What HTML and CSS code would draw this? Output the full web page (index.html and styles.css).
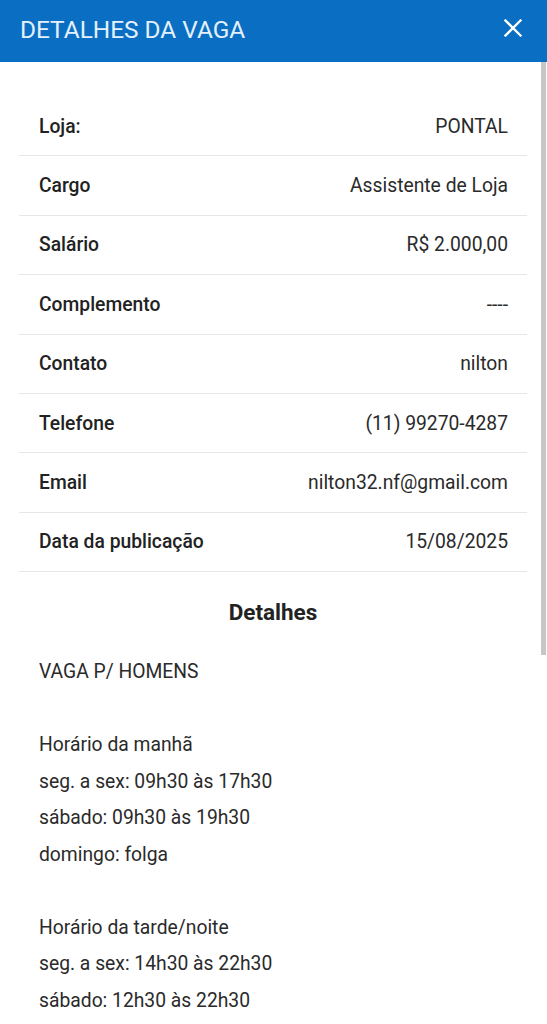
FILE: index.html
```html
<!DOCTYPE html>
<html lang="pt-BR">
  <head>
    <meta charset="UTF-8" />
    <meta name="viewport" content="width=device-width, initial-scale=1.0" />
    <title>Detalhes da vaga</title>
    <link rel="stylesheet" href="styles.css">
  </head>
  <body>
    <header class="topbar">
      <h1>DETALHES DA VAGA</h1>
      <button class="close" aria-label="Fechar">
        <svg width="18" height="18" viewBox="0 0 18 18">
          <path d="M1.5 1.5 L16.5 16.5 M16.5 1.5 L1.5 16.5" stroke="#ffffff" stroke-width="2.3" stroke-linecap="square" />
        </svg>
      </button>
    </header>

    <main class="content">
      <table class="info">
        <tbody>
          <tr><th>Loja:</th><td>PONTAL</td></tr>
          <tr><th>Cargo</th><td>Assistente de Loja</td></tr>
          <tr><th>Salário</th><td>R$ 2.000,00</td></tr>
          <tr><th>Complemento</th><td>----</td></tr>
          <tr><th>Contato</th><td>nilton</td></tr>
          <tr><th>Telefone</th><td>(11) 99270-4287</td></tr>
          <tr><th>Email</th><td>nilton32.nf@gmail.com</td></tr>
          <tr><th>Data da publicação</th><td>15/08/2025</td></tr>
        </tbody>
      </table>

      <h2>Detalhes</h2>
      <div class="details">VAGA P/ HOMENS

Horário da manhã
seg. a sex: 09h30 às 17h30
sábado: 09h30 às 19h30
domingo: folga

Horário da tarde/noite
seg. a sex: 14h30 às 22h30
sábado: 12h30 às 22h30</div>
    </main>

    <div class="scroll-thumb"></div>
  </body>
</html>
```

FILE: styles.css
```css
body {
  margin: 0;
  font-family: Roboto, "Liberation Sans", Arial, sans-serif;
  color: #222;
  background: #fff;
  height: 1024px;
  overflow: hidden;
}
.topbar {
  height: 62px;
  background-color: #0a6fc2;
  display: flex;
  align-items: center;
  justify-content: space-between;
  padding: 0 25px 0 20px;
}
.topbar h1 {
  margin: 0 0 4px;
  font-size: 24.4px;
  font-weight: 400;
  color: #e4f1fd;
}
.close {
  background: none;
  border: 0;
  padding: 0;
  display: flex;
  margin-bottom: 6px;
}
.content {
  padding: 35px 20px 0 19px;
}
.info {
  width: 100%;
  border-collapse: collapse;
  font-size: 19.3px;
}
.info th,
.info td {
  height: 58.4px;
  border-bottom: 1px solid #e6e6e6;
  padding: 0;
}
.info th {
  text-align: left;
  font-weight: 500;
  padding-left: 20px;
  color: #222;
}
.info td {
  text-align: right;
  padding-right: 19px;
  color: #2a2a2a;
}
h2 {
  margin: 27px 0 29px;
  text-align: center;
  font-size: 22.5px;
  font-weight: 700;
  line-height: 26px;
}
.details {
  white-space: pre-line;
  padding-left: 20px;
  font-size: 19.3px;
  line-height: 36.5px;
  color: #2a2a2a;
}
.scroll-thumb {
  position: absolute;
  top: 62px;
  right: 1px;
  width: 5px;
  height: 593px;
  background: #c6c6c6;
}
```
